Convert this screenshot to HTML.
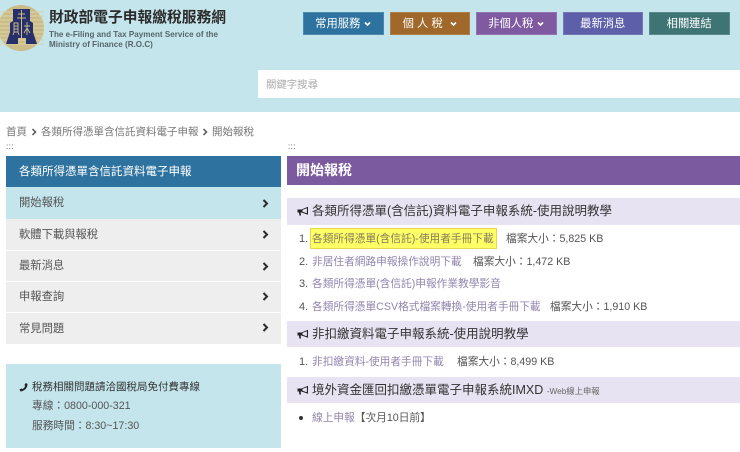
<!DOCTYPE html>
<html lang="zh-Hant"><head><meta charset="utf-8"><style>
*{box-sizing:border-box}
html,body{margin:0;padding:0}
body{width:740px;height:452px;overflow:hidden;background:#fff;position:relative;font-family:"Liberation Sans","Noto Sans CJK TC",sans-serif;color:#555}
.a{position:absolute;white-space:nowrap}
.nav{position:absolute;top:12px;height:23px;width:80.5px;color:#fff;font-size:11.3px;line-height:23px;text-align:center;border:1px solid rgba(255,255,255,.15)}
.nav svg{margin-left:4px;vertical-align:0}
.side{position:absolute;left:6px;width:275px;background:#eee;color:#555;font-size:11.3px;padding-left:13px}
.side svg{position:absolute;left:256px}
.sec{position:absolute;left:287px;width:453px;height:27px;background:#e8e3f2;color:#333;font-size:12.5px;line-height:27px;padding-left:25px;white-space:nowrap}
.sec svg{position:absolute;left:10px;top:8px}
.n{position:absolute;left:299px;font-size:11px;color:#555;line-height:16px}
.l{position:absolute;left:312px;font-size:10.7px;color:#9286ad;line-height:16px;white-space:nowrap}
.s{position:absolute;font-size:10.7px;color:#555;line-height:16px;white-space:nowrap}
.dots{font-size:8px;line-height:8px;color:#444;letter-spacing:.4px}
</style></head><body>
<div class="a" style="left:0;top:0;width:740px;height:112px;background:#c4e5ec"></div>
<svg class="a" style="left:0;top:4px" width="45" height="48" viewBox="0 0 45 48"><circle cx="21" cy="24" r="23" fill="#cbbc88"/><path d="M0 8H44M0 12H44M0 16H44M0 20H44M0 24H44M0 28H44M0 32H44M0 36H44M0 40H44" stroke="#ddd2a8" stroke-width="1"/><path d="M13 5H30V17L33 19L33 28L37 40H26V34H18V40H6L10 28L10 19L13 17Z" fill="#27306b"/><path d="M21.500 6V34M18 10H25M17 14H26" stroke="#cbbc88" stroke-width="1" fill="none"/><path d="M14 19H18V28H14ZM14 22H18M14 25H18M14 28L13 31M18 28L19 31M27 18V31M24 22H30M24 29L27 24L30 29" stroke="#cbbc88" stroke-width=".9" fill="none"/></svg>
<div class="a" style="left:49px;top:8px;font-size:14.75px;line-height:20px;font-weight:700;color:#2b2b2b">財政部電子申報繳稅服務網</div>
<div class="a" style="left:49px;top:30px;font-size:8.1px;line-height:10px;font-weight:700;color:#58656b">The e-Filing and Tax Payment Service of the<br>Ministry of Finance (R.O.C)</div>

<div class="nav" style="left:303px;background:#2e739f">常用服務<svg width="7" height="6" viewBox="0 0 7 6"><path d="M1 1.500L3.500 4L6 1.500" stroke="#fff" stroke-width="1.6" fill="none"/></svg></div>
<div class="nav" style="left:389.5px;background:#a0682a">個 人 稅 <svg width="7" height="6" viewBox="0 0 7 6"><path d="M1 1.500L3.500 4L6 1.500" stroke="#fff" stroke-width="1.6" fill="none"/></svg></div>
<div class="nav" style="left:476px;background:#7f5aa0">非個人稅<svg width="7" height="6" viewBox="0 0 7 6"><path d="M1 1.500L3.500 4L6 1.500" stroke="#fff" stroke-width="1.6" fill="none"/></svg></div>
<div class="nav" style="left:562.5px;background:#5d60a8">最新消息</div>
<div class="nav" style="left:649px;background:#3e7474">相關連結</div>

<div class="a" style="left:258px;top:70px;width:482px;height:28px;background:#fff;color:#aaa;font-size:10.4px;line-height:31px;padding-left:8px">關鍵字搜尋</div>

<div class="a" style="left:6px;top:124px;font-size:10.5px;line-height:16px;color:#777">首頁</div>
<svg class="a" style="left:31px;top:128px" width="6" height="8" viewBox="0 0 6 8"><path d="M1.500 1L4.500 4L1.500 7" stroke="#555" stroke-width="1.500" fill="none"/></svg>
<div class="a" style="left:41px;top:124px;font-size:10.5px;line-height:16px;color:#777">各類所得憑單含信託資料電子申報</div>
<svg class="a" style="left:202px;top:128px" width="6" height="8" viewBox="0 0 6 8"><path d="M1.500 1L4.500 4L1.500 7" stroke="#555" stroke-width="1.500" fill="none"/></svg>
<div class="a" style="left:212px;top:124px;font-size:10.5px;line-height:16px;color:#777">開始報稅</div>
<div class="a dots" style="left:6px;top:143px">:::</div>
<div class="a dots" style="left:288px;top:143px">:::</div>

<div class="side" style="top:156px;height:31px;background:#2e739f;color:#fff;line-height:33px;font-size:11.5px">各類所得憑單含信託資料電子申報</div>
<div class="side" style="top:187px;height:32px;background:#c4e5ec;line-height:33px">開始報稅<svg style="top:12px" width="7" height="9" viewBox="0 0 7 9"><path d="M1.500 1L5 4.500L1.500 8" stroke="#2a2a2a" stroke-width="2" fill="none"/></svg></div>
<div class="side" style="top:219px;height:31px;line-height:33px">軟體下載與報稅<svg style="top:11px" width="7" height="9" viewBox="0 0 7 9"><path d="M1.500 1L5 4.500L1.500 8" stroke="#2a2a2a" stroke-width="2" fill="none"/></svg></div>
<div class="side" style="top:251px;height:30px;line-height:31px">最新消息<svg style="top:11px" width="7" height="9" viewBox="0 0 7 9"><path d="M1.500 1L5 4.500L1.500 8" stroke="#2a2a2a" stroke-width="2" fill="none"/></svg></div>
<div class="side" style="top:282px;height:30px;line-height:31px">申報查詢<svg style="top:10px" width="7" height="9" viewBox="0 0 7 9"><path d="M1.500 1L5 4.500L1.500 8" stroke="#2a2a2a" stroke-width="2" fill="none"/></svg></div>
<div class="side" style="top:313px;height:31px;line-height:32px">常見問題<svg style="top:10px" width="7" height="9" viewBox="0 0 7 9"><path d="M1.500 1L5 4.500L1.500 8" stroke="#2a2a2a" stroke-width="2" fill="none"/></svg></div>

<div class="a" style="left:6px;top:364px;width:275px;height:84px;background:#c4e5ec"></div>
<svg class="a" style="left:19px;top:382px" width="9" height="10" viewBox="0 0 9 10"><path d="M7 1L8.500 2C8.500 6 5.500 9 1.500 9.500L.5 7.500L2.500 6.500L3.500 7C5 6.200 6 5 6 3.500L5.500 2.500Z" fill="#222"/></svg>
<div class="a" style="left:32px;top:379px;font-size:10.5px;line-height:16px;color:#333">稅務相關問題請洽國稅局免付費專線</div>
<div class="a" style="left:32px;top:398px;font-size:10.7px;line-height:16px;color:#555">專線：0800-000-321</div>
<div class="a" style="left:32px;top:418px;font-size:10.7px;line-height:16px;color:#555">服務時間：8:30~17:30</div>

<div class="a" style="left:287px;top:156px;width:453px;height:29px;background:#7b5a9f;color:#fff;font-size:14px;font-weight:700;line-height:29px;padding-left:9px">開始報稅</div>

<div class="sec" style="top:198px">
<svg width="12" height="10" viewBox="0 0 12 10"><path d="M.5 3.500H4.500L11 .8V8.700L4.500 6.500H3.600L4 9.500H2.400L2 6.500H.5Z" fill="#222"/><path d="M5.500 3.900L9.900 2.300V7.200L5.500 5.800Z" fill="#e8e3f2"/></svg>各類所得憑單(含信託)資料電子申報系統-使用說明教學</div>
<div class="a" style="left:310px;top:228px;width:187px;height:21px;background:#ffff66;border:1px solid #e6d84a"></div>
<div class="n" style="top:231px">1.</div><div class="l" style="top:231px;color:#857a5e">各類所得憑單(含信託)-使用者手冊下載</div><div class="s" style="left:506px;top:231px">檔案大小：5,825 KB</div>
<div class="n" style="top:254px">2.</div><div class="l" style="top:254px">非居住者網路申報操作說明下載</div><div class="s" style="left:473px;top:254px">檔案大小：1,472 KB</div>
<div class="n" style="top:276px">3.</div><div class="l" style="top:276px">各類所得憑單(含信託)申報作業教學影音</div>
<div class="n" style="top:299px">4.</div><div class="l" style="top:299px">各類所得憑單CSV格式檔案轉換-使用者手冊下載</div><div class="s" style="left:550px;top:299px">檔案大小：1,910 KB</div>

<div class="sec" style="top:321px;height:26px;line-height:26px">
<svg width="12" height="10" viewBox="0 0 12 10"><path d="M.5 3.500H4.500L11 .8V8.700L4.500 6.500H3.600L4 9.500H2.400L2 6.500H.5Z" fill="#222"/><path d="M5.500 3.900L9.900 2.300V7.200L5.500 5.800Z" fill="#e8e3f2"/></svg>非扣繳資料電子申報系統-使用說明教學</div>
<div class="n" style="top:354px">1.</div><div class="l" style="top:354px">非扣繳資料-使用者手冊下載</div><div class="s" style="left:457px;top:354px">檔案大小：8,499 KB</div>

<div class="sec" style="top:377px;height:26px;line-height:26px">
<svg width="12" height="10" viewBox="0 0 12 10"><path d="M.5 3.500H4.500L11 .8V8.700L4.500 6.500H3.600L4 9.500H2.400L2 6.500H.5Z" fill="#222"/><path d="M5.500 3.900L9.900 2.300V7.200L5.500 5.800Z" fill="#e8e3f2"/></svg>境外資金匯回扣繳憑單電子申報系統IMXD <span style="font-size:8.3px;color:#666">-Web線上申報</span></div>
<div class="a" style="left:299px;top:416px;width:4px;height:4px;border-radius:50%;background:#333"></div>
<div class="l" style="top:410px">線上申報<span style="color:#555">【次月10日前】</span></div>
</body></html>
